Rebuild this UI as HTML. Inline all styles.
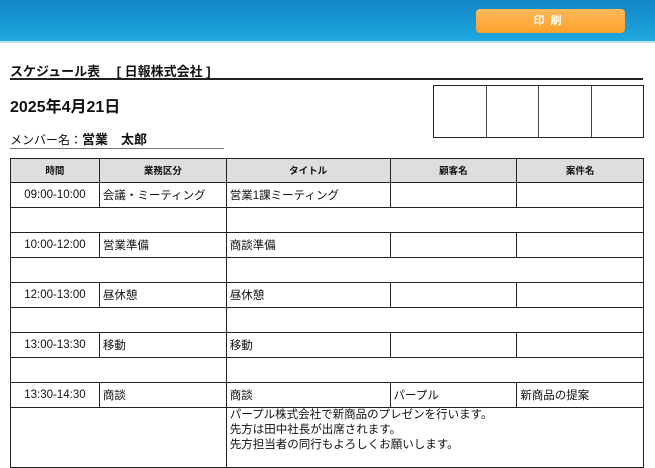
<!DOCTYPE html>
<html><head><meta charset="utf-8"><style>
*{margin:0;padding:0;box-sizing:border-box}
body{width:655px;height:441px;overflow:hidden;background:#fff;font-family:"Liberation Sans","Noto Sans CJK JP",sans-serif;color:#111;position:relative}
.hdr{position:absolute;left:0;top:0;width:655px;height:43px;background:linear-gradient(#1386c6,#1ea8de);border-bottom:2px solid #bfe3f3}
.btn{position:absolute;left:476px;top:9px;width:149px;height:24px;border-radius:4px;background:linear-gradient(#ffb95a,#fca12a);color:#fff;font-size:11px;font-weight:bold;text-align:center;line-height:24px;letter-spacing:6px}
.t1{position:absolute;left:10px;top:61px;font-size:13px;font-weight:bold;white-space:pre}
.l1{position:absolute;left:10px;top:78px;width:633px;height:2px;background:#222}
.date{position:absolute;left:10px;top:93px;font-size:16px;font-weight:bold}
.stamp{position:absolute;left:433px;top:85px;width:211px;height:53px;border:1px solid #222;display:flex}
.stamp div{flex:1;border-right:1px solid #444}.stamp div:last-child{border-right:none}
.mem{position:absolute;left:10px;top:129px;font-size:12px}
.mem b{font-size:13px}
.l2{position:absolute;left:10px;top:148px;width:214px;height:1px;background:#777}
table{position:absolute;left:10px;top:158px;width:634px;border-collapse:collapse;font-size:11.5px}
td,th{border:1px solid #222;height:25px;padding:0 3px 1px;text-align:left;white-space:nowrap}
th{background:#dedede;font-size:9.5px;text-align:center;height:24px}
td.c{text-align:center}
.big td{vertical-align:top;line-height:15px;padding-top:0}
</style></head><body>
<div class="hdr"><div class="btn">印刷</div></div>
<div class="t1">スケジュール表　 [ 日報株式会社 ]</div>
<div class="l1"></div>
<div class="date">2025年4月21日</div>
<div class="stamp"><div></div><div></div><div></div><div></div></div>
<div class="mem">メンバー名：<b>営業　太郎</b></div>
<div class="l2"></div>
<table>
<colgroup><col style="width:89px"><col style="width:127px"><col style="width:164px"><col style="width:127px"><col style="width:127px"></colgroup>
<tr><th>時間</th><th>業務区分</th><th>タイトル</th><th>顧客名</th><th>案件名</th></tr>
<tr><td class="c">09:00-10:00</td><td>会議・ミーティング</td><td>営業1課ミーティング</td><td></td><td></td></tr>
<tr><td colspan="2"></td><td colspan="3"></td></tr>
<tr><td class="c">10:00-12:00</td><td>営業準備</td><td>商談準備</td><td></td><td></td></tr>
<tr><td colspan="2"></td><td colspan="3"></td></tr>
<tr><td class="c">12:00-13:00</td><td>昼休憩</td><td>昼休憩</td><td></td><td></td></tr>
<tr><td colspan="2"></td><td colspan="3"></td></tr>
<tr><td class="c">13:00-13:30</td><td>移動</td><td>移動</td><td></td><td></td></tr>
<tr><td colspan="2"></td><td colspan="3"></td></tr>
<tr><td class="c">13:30-14:30</td><td>商談</td><td>商談</td><td>パープル</td><td>新商品の提案</td></tr>
<tr class="big"><td colspan="2" style="height:60px"></td><td colspan="3">パープル株式会社で新商品のプレゼンを行います。<br>先方は田中社長が出席されます。<br>先方担当者の同行もよろしくお願いします。</td></tr>
</table>
</body></html>
